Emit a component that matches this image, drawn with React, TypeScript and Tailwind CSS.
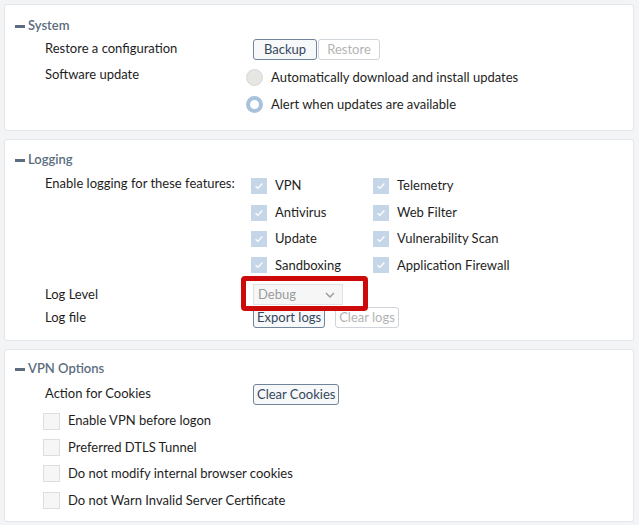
import { ReactNode } from "react";

function Panel({ title, children, className }: { title: string; children: ReactNode; className?: string }) {
  return (
    <section className={`rounded-[3px] border border-[#e3e6ea] bg-white pl-[10px] ${className ?? ""}`}>
      <div className="flex h-5 items-center gap-[3px] text-[13px] font-semibold text-[#5b6d7e]">
        <span className="mt-px block h-[3px] w-[10px] bg-[#5b6d7e]" />
        <span>{title}</span>
      </div>
      <div className="pl-[30px]">{children}</div>
    </section>
  );
}

function Btn({ children, disabled, className }: { children: ReactNode; disabled?: boolean; className?: string }) {
  return (
    <button
      className={`h-[21px] rounded-[3px] border px-[3px] text-center text-[13px] leading-[19px] ${
        disabled
          ? "border-[#cfd5db] bg-white text-[#b3b3b3]"
          : "border-[#71849a] bg-[#f6f8fa] text-[#35475a]"
      } ${className ?? ""}`}
    >
      {children}
    </button>
  );
}

function Check({ label, checked }: { label: string; checked?: boolean }) {
  return (
    <div className="flex h-[26.4px] items-center">
      {checked ? (
        <span className="flex h-4 w-4 items-center justify-center bg-[#c4d6e8]">
          <svg viewBox="0 0 16 16" className="h-3 w-3" fill="none" stroke="#ffffff" strokeWidth="1.8">
            <path d="M3.5 8.2l3 3 6-6.5" />
          </svg>
        </span>
      ) : (
        <span className="block h-[17px] w-[17px] border border-[#dedede] bg-[#f6f6f6]" />
      )}
      <span className="ml-[8px]">{label}</span>
    </div>
  );
}

function Radio({ label, selected }: { label: string; selected?: boolean }) {
  return (
    <div className="flex h-[27px] items-center">
      {selected ? (
        <span className="block h-[17px] w-[17px] rounded-full border-[4px] border-[#a9c2db] bg-white" />
      ) : (
        <span className="block h-[17px] w-[17px] rounded-full border border-[#d8d8d4] bg-[#e6e6e2]" />
      )}
      <span className="ml-[8px]">{label}</span>
    </div>
  );
}

export default function App() {
  return (
    <div
      className="flex h-[525px] w-[639px] flex-col gap-2 bg-[#f3f4f6] pl-1 pr-[5px] pt-1 text-[13px] text-[#1e1e1e]"
      style={{ fontFamily: "Lato, 'Open Sans', sans-serif" }}
    >
      <Panel title="System" className="h-[127px] pt-[11px]">
        <div className="mt-[2px] flex h-[22px] items-center">
          <div className="w-[208px]">Restore a configuration</div>
          <div className="flex gap-px">
            <Btn className="w-[64px]">Backup</Btn>
            <Btn className="w-[62px]" disabled>Restore</Btn>
          </div>
        </div>
        <div className="mt-[4px] flex">
          <div className="w-[201px] leading-5">Software update</div>
          <div>
            <Radio label="Automatically download and install updates" />
            <Radio label="Alert when updates are available" selected />
          </div>
        </div>
      </Panel>

      <Panel title="Logging" className="h-[202px] pt-[10px]">
        <div className="mt-[2px] flex">
          <div className="w-[206px] pt-px leading-5">Enable logging for these features:</div>
          <div className="grid w-[300px] grid-cols-[122px_1fr] pt-px">
            <Check label="VPN" checked />
            <Check label="Telemetry" checked />
            <Check label="Antivirus" checked />
            <Check label="Web Filter" checked />
            <Check label="Update" checked />
            <Check label="Vulnerability Scan" checked />
            <Check label="Sandboxing" checked />
            <Check label="Application Firewall" checked />
          </div>
        </div>
        <div className="mt-[5px] flex h-[22px] items-center">
          <div className="w-[208px]">Log Level</div>
          <div className="relative">
            <div className="flex h-[21px] w-[90px] items-center justify-between border border-[#e2e2e2] bg-[#f6f6f6] pl-[4px] pr-[7px] text-[#9b9b9b]">
              <span>Debug</span>
              <svg viewBox="0 0 10 6" className="h-[6px] w-[10px]" fill="none" stroke="#9a9a9a" strokeWidth="1.4">
                <path d="M1 1l4 4 4-4" />
              </svg>
            </div>
            <div className="pointer-events-none absolute -top-[8px] -left-[12px] h-[35px] w-[127px] rounded-[4px] border-[5px] border-[#cc0a0a]" />
          </div>
        </div>
        <div className="mt-[1px] flex h-[22px] items-center">
          <div className="w-[208px]">Log file</div>
          <div className="flex gap-[10px]">
            <Btn>Export logs</Btn>
            <Btn disabled>Clear logs</Btn>
          </div>
        </div>
      </Panel>

      <Panel title="VPN Options" className="h-[173px] pt-[9px]">
        <div className="mt-[3px] flex h-[24px] items-center">
          <div className="w-[208px]">Action for Cookies</div>
          <Btn>Clear Cookies</Btn>
        </div>
        <div className="-ml-[2px] mt-[2px]">
          <Check label="Enable VPN before logon" />
          <Check label="Preferred DTLS Tunnel" />
          <Check label="Do not modify internal browser cookies" />
          <Check label="Do not Warn Invalid Server Certificate" />
        </div>
      </Panel>
    </div>
  );
}
